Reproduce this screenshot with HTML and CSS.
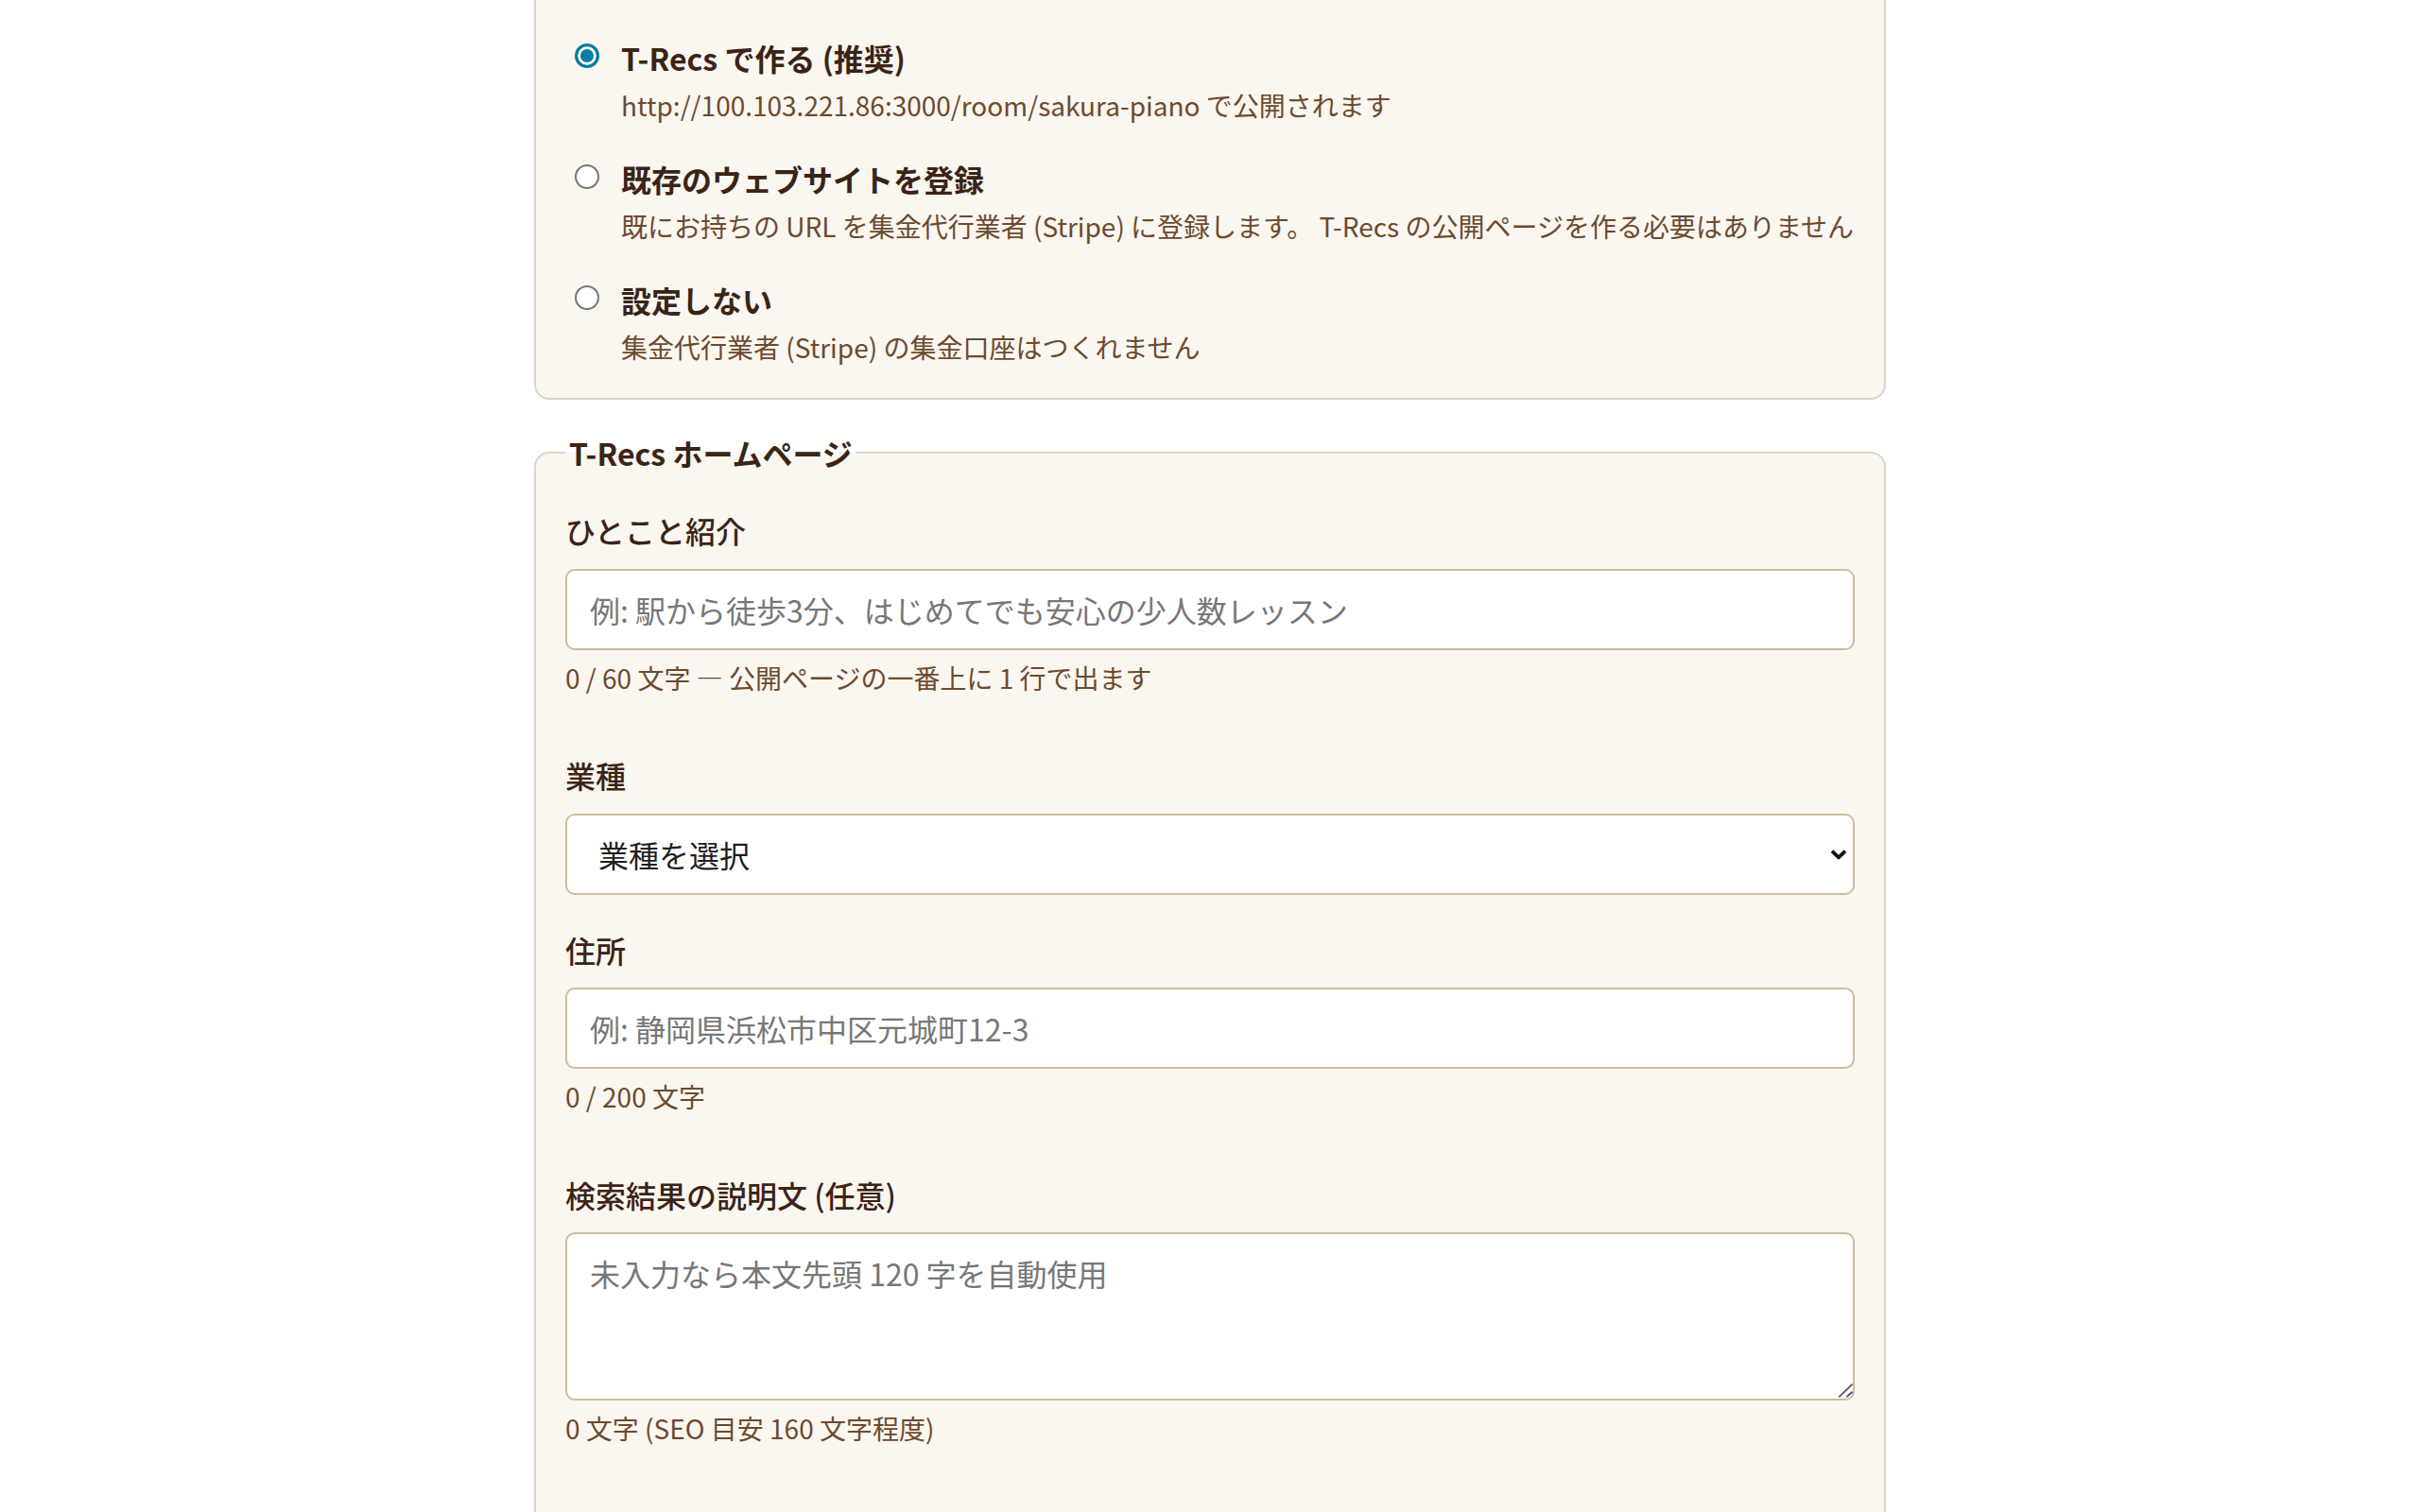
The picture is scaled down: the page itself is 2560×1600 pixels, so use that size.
FILE: index.html
```html
<!DOCTYPE html>
<html lang="ja">
<head>
<meta charset="utf-8">
<title>T-Recs 設定</title>
<link rel="stylesheet" href="styles.css">
</head>
<body>
<main class="page">
  <div class="card card--cont">
    <label class="option">
      <input type="radio" name="site" class="radio" checked>
      <span class="option-body">
        <span class="option-title">T-Recs で作る (推奨)</span>
        <span class="option-desc">http://100.103.221.86:3000/room/sakura-piano で公開されます</span>
      </span>
    </label>
    <label class="option">
      <input type="radio" name="site" class="radio">
      <span class="option-body">
        <span class="option-title">既存のウェブサイトを登録</span>
        <span class="option-desc">既にお持ちの URL を集金代行業者 (Stripe) に登録します。 T-Recs の公開ページを作る必要はありません</span>
      </span>
    </label>
    <label class="option">
      <input type="radio" name="site" class="radio">
      <span class="option-body">
        <span class="option-title">設定しない</span>
        <span class="option-desc">集金代行業者 (Stripe) の集金口座はつくれません</span>
      </span>
    </label>
  </div>

  <fieldset class="card card--fieldset">
    <legend class="legend">T-Recs ホームページ</legend>

    <div class="field">
      <label class="field-label" for="tagline">ひとこと紹介</label>
      <input id="tagline" class="control" type="text" placeholder="例: 駅から徒歩3分、はじめてでも安心の少人数レッスン">
      <p class="hint">0 / 60 文字 — 公開ページの一番上に 1 行で出ます</p>
    </div>

    <div class="field">
      <label class="field-label" for="industry">業種</label>
      <div class="select-wrap">
        <select id="industry" class="control control--select">
          <option>業種を選択</option>
        </select>
        <svg class="chevron" width="18" height="11" viewBox="0 0 18 11" aria-hidden="true">
          <polyline points="2,2.2 9,8.8 16,2.2" fill="none" stroke="#111" stroke-width="3.8" stroke-linejoin="miter"/>
        </svg>
      </div>
    </div>

    <div class="field">
      <label class="field-label" for="address">住所</label>
      <input id="address" class="control" type="text" placeholder="例: 静岡県浜松市中区元城町12-3">
      <p class="hint">0 / 200 文字</p>
    </div>

    <div class="field">
      <label class="field-label" for="seo">検索結果の説明文 (任意)</label>
      <div class="textarea-wrap">
        <textarea id="seo" class="control control--textarea" placeholder="未入力なら本文先頭 120 字を自動使用"></textarea>
        <svg class="resizer" width="20" height="20" viewBox="0 0 20 20" aria-hidden="true">
          <line x1="3.3" y1="16.3" x2="17.7" y2="2.7" stroke="#5b4b6b" stroke-width="1.8"/>
          <line x1="11.3" y1="16.3" x2="17.7" y2="10.7" stroke="#5b4b6b" stroke-width="1.8"/>
        </svg>
      </div>
      <p class="hint">0 文字 (SEO 目安 160 文字程度)</p>
    </div>
  </fieldset>
</main>
</body>
</html>
```

FILE: styles.css
```css
* {
  box-sizing: border-box;
}

html, body {
  margin: 0;
  padding: 0;
  background: #ffffff;
}

body {
  font-family: "Noto Sans CJK JP", "Noto Sans", sans-serif;
  font-size: 32px;
  line-height: 1.7;
  color: #3a2416;
}

.page {
  width: 1430px;
  margin: 0 auto;
}

.card {
  background: #faf6f0;
  border: 2px solid #ddd5c3;
  border-radius: 16px;
}

.card--cont {
  border-top: 0;
  border-radius: 0 0 16px 16px;
  padding: 34px 31px 29px;
  display: flex;
  flex-direction: column;
  gap: 26px;
}

.option {
  display: flex;
  align-items: flex-start;
  gap: 23px;
  cursor: pointer;
}

.radio {
  appearance: none;
  -webkit-appearance: none;
  flex: none;
  width: 26px;
  height: 26px;
  margin: 12px 0 0 10px;
  border: 2px solid #767676;
  border-radius: 50%;
  background: #ffffff;
}

.radio:checked {
  border: 3px solid #0a7c9d;
  background: #0a7c9d;
  box-shadow: inset 0 0 0 3px #ffffff;
}

.option-body {
  display: flex;
  flex-direction: column;
  min-width: 0;
}

.option-title {
  font-size: 32px;
  font-weight: 700;
  color: #3a2416;
}

.option-desc {
  font-size: 28px;
  color: #6c4a2e;
  white-space: nowrap;
}

.card--fieldset {
  margin: 29px 0 0;
  padding: 28px 31px 120px;
  min-width: 0;
}

.legend {
  padding: 0 4px;
  font-size: 32px;
  font-weight: 700;
  line-height: 1.7;
  color: #3a2416;
}

.field {
  display: flex;
  flex-direction: column;
  margin-bottom: 31px;
}

.field-label {
  display: block;
  font-size: 32px;
  font-weight: 500;
  color: #3a2416;
  margin-bottom: 13px;
}

.control {
  display: block;
  width: 100%;
  height: 86px;
  margin: 0;
  padding: 14px 24px;
  font-family: inherit;
  font-size: 32px;
  line-height: 1.7;
  color: #1f1f1f;
  background: #ffffff;
  border: 2px solid #cdbd9c;
  border-radius: 10px;
  outline: none;
}

.control::placeholder {
  color: #777777;
  opacity: 1;
}

.select-wrap,
.textarea-wrap {
  position: relative;
}

.control--select {
  appearance: none;
  -webkit-appearance: none;
  padding: 0 60px 0 33px;
  color: #1f1f1f;
}

.chevron {
  position: absolute;
  right: 8px;
  top: 50%;
  transform: translateY(-50%);
  pointer-events: none;
}

.control--textarea {
  height: 178px;
  resize: none;
}

.resizer {
  position: absolute;
  right: 0;
  bottom: 0;
  pointer-events: none;
}

.hint {
  margin: 6px 0 21px;
  font-size: 28px;
  color: #6c4a2e;
}
```
